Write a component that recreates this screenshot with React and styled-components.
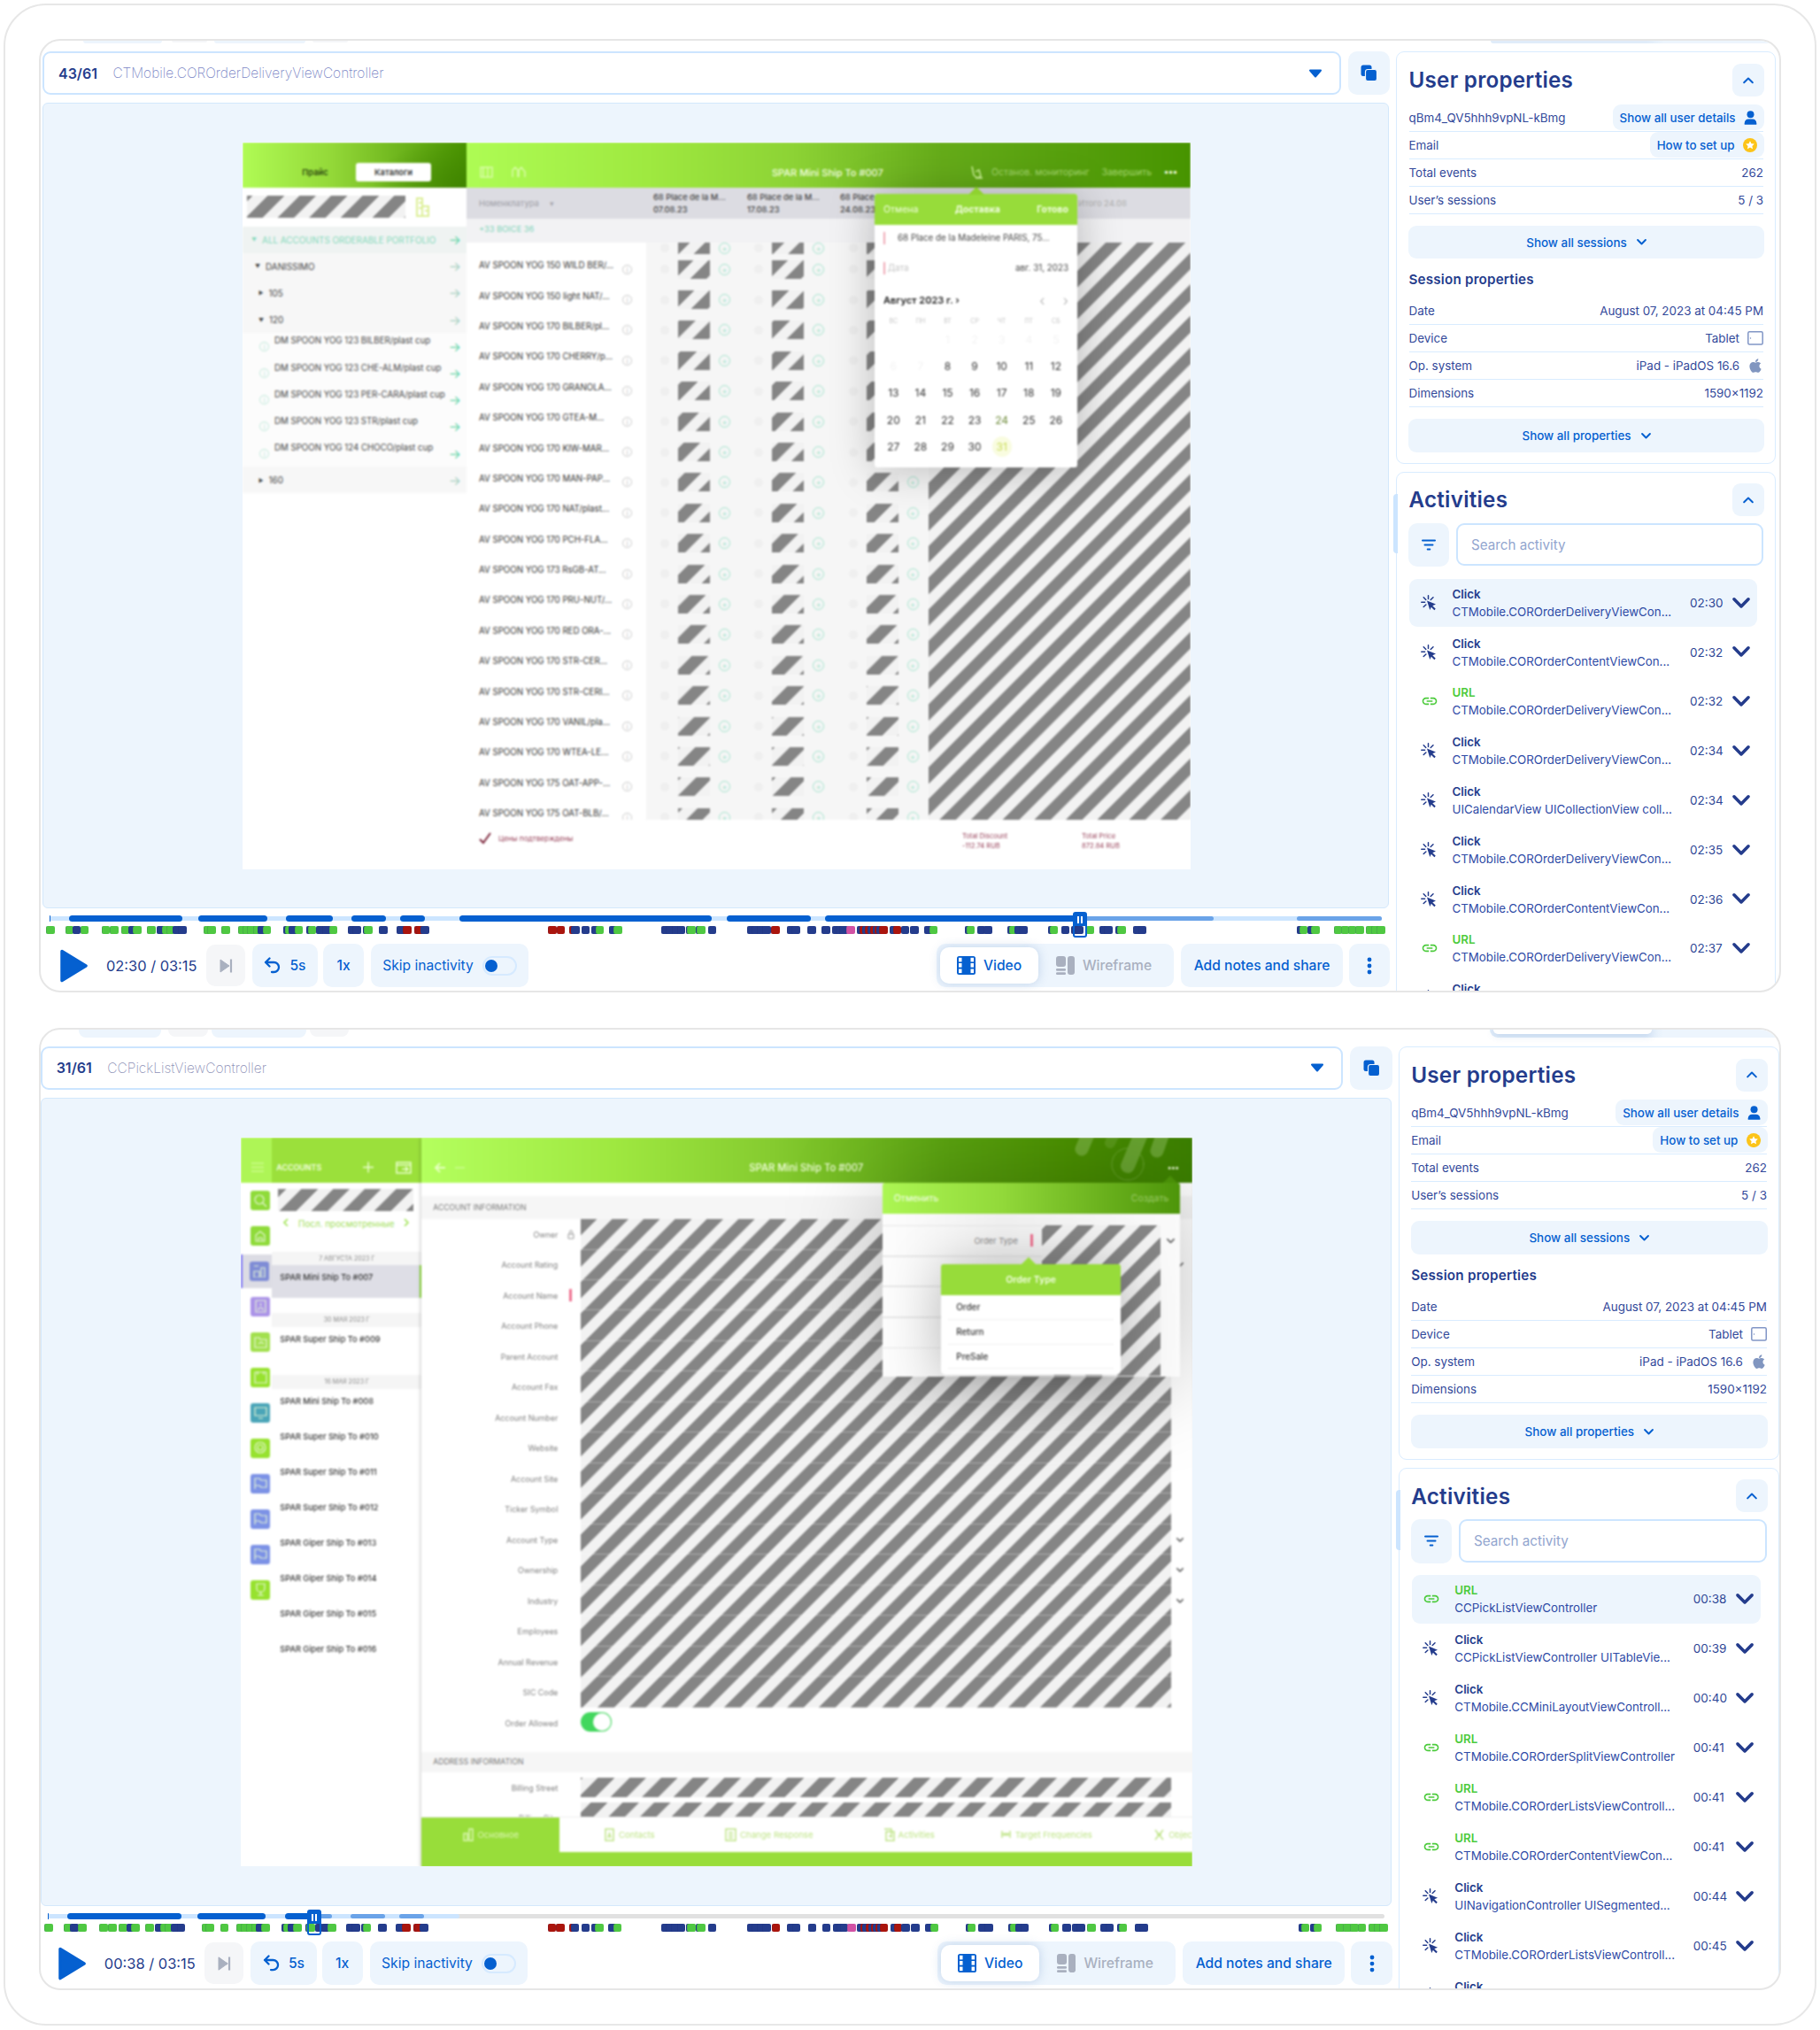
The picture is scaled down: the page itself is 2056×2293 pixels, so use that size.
import React from "react";
import styled, { createGlobalStyle, css } from "styled-components";
import { FaApple } from "react-icons/fa";
import { MdLink } from "react-icons/md";

const blue = "#0560d0";
const navy = "#243c8c";
const pale = "#edf5fd";
const line = "#cce5ff";

const GlobalStyle = createGlobalStyle`
  *, *::before, *::after { box-sizing: border-box; }
  body { margin: 0; background: #fff; font-family: Inter, "Liberation Sans", sans-serif; }
  svg { display: block; flex: none; }
`;

/* ---------- page frame ---------- */

const Page = styled.div`
  width: 2056px;
  height: 2293px;
  padding: 4px;
  background: #fff;
`;
const Frame = styled.main`
  width: 2048px;
  height: 2284px;
  border: 2px solid #e7e7e7;
  border-radius: 48px;
  padding: 38px;
  display: flex;
  flex-direction: column;
  gap: 40px;
`;
const Panel = styled.section`
  width: 1968px;
  height: ${(p) => p.$h}px;
  border: 2px solid #e6e6e6;
  border-radius: 24px;
  overflow: hidden;
  background: #fff;
`;
const Scale = styled.div`
  zoom: ${(p) => p.$zoom};
`;

/* ---------- remains of the toolbar above ---------- */

const Peek = styled.div`
  height: ${(p) => p.$h}px;
  display: flex;
  align-items: flex-start;
  padding-left: ${(p) => p.$left}px;
`;
const PeekPill = styled.i`
  width: ${(p) => p.$w}px;
  height: ${(p) => p.$h}px;
  margin-right: ${(p) => p.$gap}px;
  border-radius: 0 0 8px 8px;
  background: ${(p) => (p.$grey ? "#f5f6f8" : pale)};
`;
const PeekSwitch = styled.i`
  width: 326px;
  height: ${(p) => p.$h}px;
  margin-left: auto;
  background: linear-gradient(90deg, #e0ecf9 54%, ${pale} 60%);
  border-radius: 0 0 0 10px;
  display: flex;
  padding-left: 4px;
`;
const PeekThumb = styled.i`
  width: 178px;
  height: ${(p) => p.$h}px;
  background: #fff;
  border-radius: 0 0 10px 10px;
  box-shadow: 0 1px 8px rgba(70, 120, 190, 0.3);
`;

/* ---------- player column ---------- */

const Body = styled.div`
  display: flex;
  align-items: flex-start;
  margin-left: ${(p) => p.$left}px;
`;
const Player = styled.div`
  width: 1522px;
  flex: none;
  display: flex;
  flex-direction: column;
`;
const PickerRow = styled.div`
  display: flex;
  gap: 8px;
  margin-bottom: 9px;
`;
const Picker = styled.div`
  flex: 1;
  height: 49px;
  border: 2px solid ${line};
  border-radius: 9px;
  display: flex;
  align-items: center;
  padding: 0 19px 0 16px;
  font-size: 16px;
`;
const PickerCount = styled.b`
  margin-right: 17.500px;
  font-weight: 600;
  color: ${navy};
`;
const PickerName = styled.span`
  flex: 1;
  font-size: 15.450px;
  font-weight: 200;
  color: ${(p) => (p.$muted ? "#8f93b8" : "#7c87c6")};
`;
const IconButton = styled.div`
  width: ${(p) => p.$w || 47}px;
  height: 49px;
  border-radius: 10px;
  background: ${pale};
  display: flex;
  align-items: center;
  justify-content: center;
`;
const Stage = styled.div`
  width: 1521px;
  height: 910px;
  padding-left: 2px;
  background: ${pale};
  border: 1px solid #d3e8fc;
  border-radius: 6px;
  display: flex;
  align-items: center;
  justify-content: center;
`;

/* ---------- timeline ---------- */

const Timeline = styled.div`
  height: 40px;
  margin: 0 9px 0 8px;
  position: relative;
`;
const Track = styled.div`
  position: absolute;
  left: 0;
  right: 0;
  top: 9px;
  height: 5px;
  border-radius: 3px;
  background: ${(p) => p.$c};
`;
const Segment = styled.i`
  position: absolute;
  top: ${(p) => (p.$played ? 8 : 9)}px;
  height: ${(p) => (p.$played ? 7 : 5)}px;
  border-radius: 4px;
  background: ${(p) => (p.$played ? blue : "#6aa3e8")};
`;
const Mark = styled.i`
  position: absolute;
  top: 20px;
  width: 9.5px;
  height: 9px;
  border-radius: 2px;
  background: ${(p) => p.$c};
  box-shadow: inset 0.5px 0 0 rgba(30, 40, 110, 0.3);
`;
const Playhead = styled.i`
  position: absolute;
  top: 4px;
  width: 16px;
  height: 29px;
  margin-left: -8px;
  border: 2px solid ${blue};
  border-radius: 3px;
  display: flex;
  justify-content: center;
  align-items: flex-start;
`;
const PlayheadGrip = styled.span`
  width: 12px;
  height: 14px;
  background: ${blue};
  display: flex;
  gap: 2px;
  align-items: center;
  justify-content: center;
  &::before,
  &::after {
    content: "";
    width: 2px;
    height: 8px;
    background: #fff;
  }
`;

const TOTAL = 2950;
const SEGMENTS = [
  [0, 2], [43, 295], [330, 482], [524, 628], [668, 745], [777, 832],
  [907, 1467], [1499, 1686], [1718, 2578], [2762, 2950],
];
const COLORS = { g: "#4fc842", n: "#243c8c", r: "#aa150d", p: "#d152a4" };
const EVENTS = `g-7 g35 n50 g68 g115 g134 g158 n175 g185 g216 n237 g248 g258 n273 n285 g341 g349 g381
g417 g427 g438 g450 n460 g472 n517 g521 n530 g542 n569 g572 n590 n604 g619 n660 n671 n693 g696 n730
n769 r783 r808 r812 n822 r1104 r1123 r1151 n1155 n1178 n1200 g1209 n1238 g1249 n1355 n1365 n1377 n1389
n1410 g1412 n1430 g1433 n1458 n1544 n1554 n1566 n1578 r1598 n1632 n1643 n1678 n1710 n1733 n1741 n1749
p1765 n1787 r1794 n1799 r1805 n1811 r1817 n1822 r1827 n1831 r1837 n1860 r1868 n1885 n1906 n1937 g1948
n2027 g2030 n2054 n2068 n2121 g2125 n2136 n2147 n2211 g2214 n2240 n2262 n2271 g2295 n2324 n2335 n2360
g2364 n2400 n2410 n2762 g2767 n2786 g2794 g2844 g2859 g2875 g2892 g2915 g2927 g2939`
  .split(/\s+/)
  .map((e) => ({ color: COLORS[e[0]], at: Number(e.slice(1)) }));

const pct = (v) => `${(v / TOTAL) * 100}%`;

function PlayTimeline({ now, loaded }) {
  return (
    <Timeline>
      <Track $c="#e1e1e1" />
      <Track $c={line} style={{ right: pct(TOTAL - loaded) }} />
      {SEGMENTS.filter(([, b]) => b <= loaded).flatMap(([a, b]) => {
        const out = [];
        if (b > now)
          out.push(<Segment key={`b${a}`} style={{ left: pct(Math.max(a, now)), width: pct(b - Math.max(a, now)) }} />);
        if (a < now)
          out.push(<Segment key={`a${a}`} $played style={{ left: pct(a), width: pct(Math.min(b, now) - a) }} />);
        return out;
      })}
      {EVENTS.map((e, i) => (
        <Mark key={i} $c={e.color} style={{ left: pct(e.at) }} />
      ))}
      <Playhead style={{ left: pct(now) }}>
        <PlayheadGrip />
      </Playhead>
    </Timeline>
  );
}

/* ---------- player controls ---------- */

const Controls = styled.div`
  display: flex;
  align-items: center;
  height: 49px;
  font-size: 15.600px;
  padding-left: 20px;
`;
const Clock = styled.span`
  width: 113px;
  margin-left: 21px;
  font-size: 16.400px;
  color: ${navy};
  white-space: nowrap;
`;
const Control = styled.div`
  height: ${(p) => (p.$grey ? 47 : 49)}px;
  width: ${(p) => p.$w}px;
  margin-left: ${(p) => p.$ml || 0}px;
  border-radius: 10px;
  background: ${(p) => (p.$grey ? "#f5f6f8" : pale)};
  display: flex;
  align-items: center;
  justify-content: center;
  gap: 10px;
  font-weight: ${(p) => (p.$light ? 430 : 490)};
  color: ${blue};
  white-space: nowrap;
`;
const Toggle = styled.i`
  width: 39px;
  height: 22px;
  border: 2px solid #d6eaff;
  border-radius: 11px;
  display: flex;
  align-items: center;
  padding-left: 1px;
  &::before {
    content: "";
    width: 14px;
    height: 14px;
    border-radius: 50%;
    background: ${blue};
  }
`;
const ViewSwitch = styled.div`
  margin-left: auto;
  width: 268px;
  height: 49px;
  border-radius: 10px;
  background: ${pale};
  padding: 4px;
  display: flex;
  align-items: center;
`;
const ViewOption = styled.div`
  height: 41px;
  width: ${(p) => (p.$on ? 111 : 148)}px;
  border-radius: 10px;
  display: flex;
  align-items: center;
  justify-content: center;
  gap: 9px;
  font-weight: 490;
  color: ${(p) => (p.$on ? blue : "#a9b0bf")};
  ${(p) =>
    p.$on &&
    css`
      background: #fff;
      box-shadow: 0 0 12px rgba(60, 110, 180, 0.25);
    `}
`;

const PlayIcon = () => (
  <svg width="31" height="38" viewBox="0 0 31 38">
    <path d="M2 2.5 29 19 2 35.5Z" fill={blue} stroke={blue} strokeWidth="3.5" strokeLinejoin="round" />
  </svg>
);
const NextIcon = () => (
  <svg width="15" height="16" viewBox="0 0 15 16">
    <path d="M1 1 11 8 1 15Z" fill="#a9b0bf" stroke="#a9b0bf" strokeLinejoin="round" />
    <path d="M13 .5v15" stroke="#a9b0bf" strokeWidth="2.2" />
  </svg>
);
const BackIcon = () => (
  <svg width="19" height="19" viewBox="0 0 19 19" fill="none" stroke={blue} strokeWidth="2.3">
    <path d="M6.5 1.5 2 6l4.500 4.500M2 6h9.500a5.500 5.500 0 0 1 0 11H9" strokeLinecap="round" strokeLinejoin="round" />
  </svg>
);
const FilmIcon = () => (
  <svg width="21" height="21" viewBox="0 0 21 21">
    <rect width="21" height="21" rx="2.500" fill={blue} />
    {[1.8, 8, 14.500].flatMap((y) => [
      <rect key={`l${y}`} x="2" y={y} width="3.500" height="4.600" fill="#fff" />,
      <rect key={`r${y}`} x="15.500" y={y} width="3.500" height="4.600" fill="#fff" />,
    ])}
  </svg>
);
const WireIcon = () => (
  <svg width="21" height="21" viewBox="0 0 21 21" fill="#a9b0bf">
    <rect width="11" height="12" rx="3" />
    <rect x="13" width="8" height="21" rx="3" />
    <rect y="14" width="11" height="2.700" rx="1.300" />
    <rect y="18.300" width="11" height="2.700" rx="1.300" />
  </svg>
);
const DotsIcon = () => (
  <svg width="6" height="20" viewBox="0 0 6 20" fill={blue}>
    <circle cx="3" cy="3" r="2.400" />
    <circle cx="3" cy="10" r="2.400" />
    <circle cx="3" cy="17" r="2.400" />
  </svg>
);
const CopyIcon = () => (
  <svg width="19" height="19" viewBox="0 0 19 19">
    <rect x="0.500" y="0.500" width="12" height="12.500" rx="2.500" fill={blue} />
    <rect x="5.500" y="5.500" width="13" height="13" rx="2.500" fill={blue} stroke={pale} strokeWidth="1.200" />
  </svg>
);
const CaretIcon = () => (
  <svg width="16" height="10" viewBox="0 0 16 10">
    <path d="M2 1.500h12L8 8.500Z" fill={blue} stroke={blue} strokeWidth="2" strokeLinejoin="round" />
  </svg>
);
const Chevron = ({ w = 12, sw = 2, up, color = blue }) => (
  <svg width={w} height={w * 0.62} viewBox="0 0 16 10" fill="none" stroke={color} strokeWidth={(sw * 16) / w}
    strokeLinecap="round" strokeLinejoin="round" overflow="visible">
    <path d={up ? "M1.500 8.500 8 2l6.500 6.500" : "M1.500 1.500 8 8l6.500-6.500"} />
  </svg>
);

/* ---------- sidebar ---------- */

const Side = styled.aside`
  width: 429px;
  margin-left: 7px;
  display: flex;
  flex-direction: column;
  position: relative;
`;
const ResizeGrip = styled.i`
  position: absolute;
  left: -3px;
  top: 500px;
  width: 5px;
  height: 67px;
  border-radius: 4px 0 0 4px;
  background: ${line};
`;
const Card = styled.div`
  border: 1px solid #d9ecff;
  border-radius: 9px;
  padding: ${(p) => p.$pt || 12.5}px 12px 12px 13px;
  margin-bottom: 9.5px;
`;
const CardHead = styled.header`
  display: flex;
  align-items: center;
  justify-content: space-between;
  height: 37.5px;
`;
const CardTitle = styled.h2`
  margin: 0 0 0 0.5px;
  font-size: 24.200px;
  font-weight: 600;
  letter-spacing: 0.25px;
  color: ${navy};
`;
const Collapse = styled.span`
  width: 36px;
  height: 37px;
  border-radius: 9px;
  background: ${pale};
  display: flex;
  align-items: center;
  justify-content: center;
`;
const Props = styled.dl`
  margin: ${(p) => p.$mt || 0}px 1px 0 0.5px;
`;
const Prop = styled.div`
  height: 31.1px;
  border-bottom: 1px solid #d9ecff;
  display: flex;
  align-items: center;
  justify-content: space-between;
  font-size: 13.400px;
  font-weight: 370;
  color: #33499a;
`;
const PropName = styled.dt``;
const PropValue = styled.dd`
  margin: 0;
  display: flex;
  align-items: center;
  gap: 9px;
`;
const Pill = styled.span`
  height: 29px;
  margin-right: -1px;
  padding: 0 8px;
  border-radius: 9px;
  background: ${pale};
  display: flex;
  align-items: center;
  gap: 9.5px;
  font-size: 13.350px;
  font-weight: 480;
  color: ${blue};
`;
const WideButton = styled.div`
  height: 37.5px;
  margin-top: 12.900px;
  border-radius: 9px;
  background: ${pale};
  display: flex;
  align-items: center;
  justify-content: center;
  gap: 11px;
  font-size: 13.400px;
  font-weight: 480;
  color: ${blue};
`;
const SubTitle = styled.h3`
  margin: 0 0 0 0.5px;
  padding-top: 3px;
  height: 43.5px;
  display: flex;
  align-items: center;
  font-size: 15.200px;
  font-weight: 600;
  letter-spacing: 0.2px;
  color: ${navy};
`;
const SearchRow = styled.div`
  display: flex;
  gap: 8px;
  margin-top: 8px;
`;
const Search = styled.div`
  flex: 1;
  height: 48px;
  margin-right: 1px;
  border: 2px solid ${line};
  border-radius: 9px;
  padding-left: 15px;
  display: flex;
  align-items: center;
  font-size: 15.200px;
  font-weight: 370;
  color: #93a6cf;
`;
const Activities = styled.div`
  margin: 13.5px 8px 0 1px;
`;
const Activity = styled.div`
  height: 54.500px;
  margin-bottom: 1.3px;
  border-radius: 9px;
  background: ${(p) => (p.$on ? pale : "transparent")};
  display: flex;
  align-items: center;
  padding: 0 8px 0 12.5px;
`;
const ActIcon = styled.span`
  width: 36px;
`;
const ActText = styled.div`
  flex: 1;
  font-size: 13.300px;
  line-height: 20px;
  color: #2f4ba6;
  white-space: nowrap;
`;
const ActKind = styled.div`
  font-weight: 600;
  color: ${(p) => (p.$url ? "#4ccb3c" : navy)};
`;
const ActTime = styled.span`
  width: 48px;
  font-size: 13.500px;
  color: #2f4796;
`;

const ClickIcon = () => (
  <svg width="18" height="18" viewBox="0 0 18 18" fill={navy}>
    <path d="M7 6.600 17 10.600 13.300 12.200 16.800 15.700 15.300 17.200 11.800 13.700 10.300 17Z" />
    <path d="M8.500.8v3.600M3.200 2.800l2.600 2.700M.8 8.200h3.800M3.200 13.500l2.700-2.500M14 2.800l-2.800 2.700" stroke={navy} strokeWidth="1.500" strokeLinecap="round" />
  </svg>
);
const FilterIcon = () => (
  <svg width="16" height="13" viewBox="0 0 16 13" stroke={blue} strokeWidth="2" strokeLinecap="round">
    <path d="M1 1.500h14M3.500 6.500h9M6.700 11.500h2.600" />
  </svg>
);
const PersonIcon = () => (
  <svg width="15" height="16" viewBox="0 0 15 16" fill={blue}>
    <circle cx="7.500" cy="4.300" r="4" />
    <path d="M.7 15.700v-1.400c0-3 2-4.700 4.500-4.700h4.600c2.500 0 4.500 1.700 4.500 4.700v1.400Z" />
  </svg>
);
const StarBadge = () => (
  <svg width="16" height="16" viewBox="0 0 16 16">
    <circle cx="8" cy="8" r="8" fill="#fcc419" />
    <path d="m8 3.200 1.500 3 3.300.4-2.400 2.300.6 3.300-3-1.600-3 1.600.6-3.300-2.400-2.300 3.300-.4Z" fill="#fff" />
  </svg>
);
const TabletIcon = () => (
  <svg width="18" height="16" viewBox="0 0 18 16" fill="none" stroke="#8196c6">
    <rect x=".8" y=".8" width="16.400" height="14.200" rx="1.500" strokeWidth="1.500" />
    <path d="M3.500 7.300v1.400" strokeWidth="1.200" />
  </svg>
);

function Sidebar({ items }) {
  return (
    <Side>
      <Card>
        <CardHead>
          <CardTitle>User properties</CardTitle>
          <Collapse><Chevron up /></Collapse>
        </CardHead>
        <Props $mt={8.7}>
          <Prop>
            <PropName>qBm4_QV5hhh9vpNL-kBmg</PropName>
            <Pill>Show all user details<PersonIcon /></Pill>
          </Prop>
          <Prop>
            <PropName>Email</PropName>
            <Pill>How to set up<StarBadge /></Pill>
          </Prop>
          <Prop><PropName>Total events</PropName><PropValue>262</PropValue></Prop>
          <Prop><PropName>User’s sessions</PropName><PropValue>5 / 3</PropValue></Prop>
        </Props>
        <WideButton>Show all sessions<Chevron w={11} /></WideButton>
        <SubTitle>Session properties</SubTitle>
        <Props>
          <Prop><PropName>Date</PropName><PropValue>August 07, 2023 at 04:45 PM</PropValue></Prop>
          <Prop><PropName>Device</PropName><PropValue>Tablet<TabletIcon /></PropValue></Prop>
          <Prop><PropName>Op. system</PropName><PropValue>iPad - iPadOS 16.6<FaApple size={18} color="#8196c0" /></PropValue></Prop>
          <Prop><PropName>Dimensions</PropName><PropValue>1590×1192</PropValue></Prop>
        </Props>
        <WideButton>Show all properties<Chevron w={11} /></WideButton>
      </Card>
      <Card $pt={11.3}>
        <CardHead>
          <CardTitle>Activities</CardTitle>
          <Collapse><Chevron up /></Collapse>
        </CardHead>
        <SearchRow>
          <IconButton $w={46}><FilterIcon /></IconButton>
          <Search>Search activity</Search>
        </SearchRow>
        <Activities>
          {items.map(([kind, text, time], i) => (
            <Activity key={i} $on={i === 0}>
              <ActIcon>{kind === "URL" ? <MdLink size={20} color="#4ccb3c" /> : <ClickIcon />}</ActIcon>
              <ActText>
                <ActKind $url={kind === "URL"}>{kind}</ActKind>
                {text}
              </ActText>
              <ActTime>{time}</ActTime>
              <Chevron w={20} sw={3.6} color={navy} />
            </Activity>
          ))}
        </Activities>
      </Card>
      <ResizeGrip />
    </Side>
  );
}

/* ---------- recorded tablet screens: shared parts ---------- */

const Clip = styled.div`
  width: 1071px;
  height: 821px;
  overflow: hidden;
  background: #fff;
`;
const Screen = styled.div`
  width: ${(p) => p.$w}px;
  height: ${(p) => p.$h}px;
  zoom: ${(p) => p.$zoom || 1};
  position: relative;
  display: flex;
  font-size: 9.300px;
  color: #444;
  filter: blur(0.8px);
  white-space: nowrap;
`;
const Hatch = styled.div`
  ${(p) => css`
    width: ${p.$w}px;
    height: ${p.$h}px;
    background: repeating-linear-gradient(
      135deg,
      #858585 ${p.$s * 0.707}px,
      #858585 ${(p.$s + 18) * 0.707}px,
      #f2f2f2 ${(p.$s + 18.7) * 0.707}px,
      #f2f2f2 ${(p.$s + 35) * 0.707}px,
      #858585 ${(p.$s + 35.7) * 0.707}px
    );
  `}
  flex: none;
`;
const Column = styled.div`
  width: ${(p) => p.$w}px;
  height: 100%;
  flex: none;
  display: flex;
  flex-direction: column;
  background: ${(p) => p.$bg || "#fff"};
`;
const Bar = styled.div`
  height: 51.500px;
  flex: none;
  display: flex;
  align-items: center;
  padding: 17px ${(p) => p.$pr || 0}px 0 ${(p) => p.$pl || 0}px;
  background: ${(p) => p.$bg};
  color: #f3ffe0;
`;
const RedBar = styled.i`
  width: ${(p) => p.$w || 3}px;
  height: 14px;
  background: ${(p) => p.$c || "#ee6f8e"};
  margin-left: ${(p) => p.$ml || 0}px;
`;
const Grow = styled.i`
  flex: 1;
`;

/* ---------- screen 1: order table ---------- */

const SegLabel = styled.span`
  width: ${(p) => p.$w}px;
  padding-left: 36px;
  text-align: center;
  font-weight: 600;
  color: #2e4a10;
`;
const SegOn = styled.span`
  width: 85px;
  height: 21px;
  border-radius: 3px;
  background: #fff;
  display: flex;
  align-items: center;
  justify-content: center;
  font-weight: 600;
  color: #333;
`;
const BrandRow = styled.div`
  height: 43.500px;
  flex: none;
  display: flex;
  align-items: center;
  gap: 12px;
  padding: 0 5px;
`;
const TreeRow = styled.div`
  height: 30.2px;
  flex: none;
  display: flex;
  align-items: center;
  padding: 0 6px 0 ${(p) => p.$pl}px;
  gap: 6px;
  background: ${(p) => (p.$root ? "#eff3f2" : p.$item ? "#fcfcfc" : "#f7f7f7")};
  color: ${(p) => (p.$root ? "#86d9bb" : "#444")};
`;
const TreeText = styled.span`
  flex: 1;
  min-width: 0;
  font-size: ${(p) => (p.$item ? 9.700 : 9.900)}px;
  padding-bottom: ${(p) => (p.$item ? 13 : 0)}px;
`;
const TreeCaret = styled.span`
  font-size: 6px;
`;
const TreeArrow = styled.span`
  font-size: 15px;
  color: ${(p) => (p.$hot ? "#5ed3a6" : "#a5cfc0")};
`;
const Ring = styled.i`
  width: ${(p) => p.$w || 11}px;
  height: ${(p) => p.$w || 11}px;
  border-radius: 50%;
  border: 1px solid ${(p) => p.$c};
  display: flex;
  align-items: center;
  justify-content: center;
  font-style: normal;
  font-size: 9px;
  line-height: 1;
  color: ${(p) => p.$c};
  flex: none;
`;
const TableHead = styled.div`
  height: 34.500px;
  flex: none;
  display: flex;
  align-items: center;
  padding-top: 1px;
  background: #dcdce2;
  color: #999;
`;
const HeadCell = styled.div`
  width: ${(p) => p.$w}px;
  padding-left: ${(p) => p.$pl}px;
  line-height: 13.400px;
  font-weight: 500;
  color: ${(p) => p.$c || "#444"};
`;
const GroupRow = styled.div`
  height: 27px;
  flex: none;
  padding: 6px 14px;
  background: #f2f2f4;
  color: #7fd3b8;
`;
const TableBody = styled.div`
  height: 652.500px;
  flex: none;
  display: flex;
  overflow: hidden;
  background: #fff;
`;
const TableRows = styled.div`
  width: 522px;
  flex: none;
`;
const TableRow = styled.div`
  height: ${(p) => p.$h || 34.4}px;
  overflow: hidden;
  display: flex;
  align-items: center;
`;
const NameCell = styled.div`
  width: 203px;
  height: 100%;
  padding-left: 14px;
  display: flex;
  align-items: center;
`;
const Name = styled.span`
  width: 162px;
  padding-bottom: 9px;
  font-size: 9.700px;
  color: #333;
`;
const QtyCell = styled.div`
  width: 106.300px;
  height: 100%;
  padding-left: 16px;
  display: flex;
  align-items: center;
  gap: 10px;
  background: #f6f6f6;
`;
const Minus = styled.i`
  width: 10px;
  height: 10px;
  border-radius: 50%;
  background: #efefef;
`;
const FootRow = styled.div`
  flex: 1;
  display: flex;
  padding: 14px 0 0 14px;
  line-height: 10.500px;
  font-size: 7.600px;
  color: #98425a;
`;
const FootNote = styled.span`
  width: 532px;
  flex: none;
  padding: 2px 0 0 8px;
  font-size: 8.200px;
`;
const FootTotal = styled.span`
  width: 135px;
  flex: none;
`;
const Popover = styled.div`
  position: absolute;
  left: ${(p) => p.$x}px;
  top: ${(p) => p.$y}px;
  width: ${(p) => p.$w}px;
  height: ${(p) => p.$h}px;
  border-radius: ${(p) => p.$r || 3}px;
  background: #fff;
  box-shadow: 0 2px ${(p) => p.$blur || 40}px rgba(0, 0, 0, 0.25);
  &::before {
    content: "";
    position: absolute;
    left: ${(p) => p.$tip - 9}px;
    top: -8px;
    border: 9px solid transparent;
    border-top: 0;
    border-bottom-color: ${(p) => p.$tipColor};
  }
`;
const PopHead = styled.div`
  height: ${(p) => p.$h}px;
  padding: 0 ${(p) => p.$px}px;
  border-radius: 3px 3px 0 0;
  background: ${(p) => p.$bg || "#97dc3a"};
  display: flex;
  align-items: center;
  justify-content: ${(p) => (p.$center ? "center" : "space-between")};
  font-size: 10.500px;
  font-weight: ${(p) => (p.$center ? 600 : 400)};
  color: #f4ffe6;
`;
const PopRow = styled.div`
  height: ${(p) => p.$h}px;
  padding: 0 10px;
  display: flex;
  align-items: center;
  gap: ${(p) => p.$gap || 3}px;
  font-size: 9.800px;
`;
const Month = styled.b`
  font-size: 11px;
  font-weight: 600;
  color: #222;
`;
const Faint = styled.span`
  color: #c4c4c4;
`;
const MonthArrows = styled.span`
  font-size: 16px;
  word-spacing: 16px;
  color: #bbb;
`;
const Days = styled.div`
  display: grid;
  grid-template-columns: repeat(7, 30.600px);
  grid-auto-rows: ${(p) => (p.$names ? 14 : 30.2)}px;
  padding-left: 6px;
  place-items: center;
  font-size: ${(p) => (p.$names ? 7 : 12)}px;
  color: #333;
`;
const Day = styled.span`
  ${(p) => p.$off && "color: #f3f3f3;"}
  ${(p) => p.$today && "color: #6d8a3a;"}
  ${(p) => p.$on && "color: #c9db55; background: #f9fce0; border-radius: 50%; padding: 4px 5px;"}
`;

const TREE = [
  ["root", "ALL ACCOUNTS ORDERABLE PORTFOLIO", 10],
  ["node", "DANISSIMO", 14],
  ["leaf", "105", 18],
  ["node", "120", 18],
  ["item", "DM SPOON YOG 123 BILBER/plast cup"],
  ["item", "DM SPOON YOG 123 CHE-ALM/plast cup"],
  ["item", "DM SPOON YOG 123 PER-CARA/plast cup"],
  ["item", "DM SPOON YOG 123 STR/plast cup"],
  ["item", "DM SPOON YOG 124 CHOCO/plast cup"],
  ["leaf", "160", 18],
];
const PRODUCTS = [
  "150 WILD BER/...", "150 light NAT/...", "170 BILBER/pl...", "170 CHERRY/p...", "170 GRANOLA...",
  "170 GTEA-M...", "170 KIW-MAR...", "170 MAN-PAP...", "170 NAT/plast...", "170 PCH-FLA...",
  "173 RsGB-AT...", "170 PRU-NUT/...", "170 RED ORA-...", "170 STR-CER...", "170 STR-CERI...",
  "170 VANIL/pla...", "170 WTEA-LE...", "175 OAT-APP-...", "175 OAT-BLB/...",
];

function OrderScreen() {
  const qty = (i) =>
    [0, 1, 2].map((c) => (
      <QtyCell key={c}>
        <Minus />
        <Hatch $w={36} $h={21} $s={-1 + i * 1.3 + c * 0.8} />
        {!(c === 2 && i < 7) && <Ring $w={13} $c="#9fe3cb">+</Ring>}
      </QtyCell>
    ));
  return (
    <Screen $w={1071} $h={821}>
      <Column $w={253}>
        <Bar $bg="radial-gradient(ellipse 120px 60px at 105% 100%, #3f8300, transparent), linear-gradient(90deg, #b0fb54, #93d838 40%, #6cb31b 72%, #4a9500)">
          <SegLabel $w={128}>Прайс</SegLabel>
          <SegOn>Каталоги</SegOn>
        </Bar>
        <BrandRow>
          <Hatch $w={179} $h={25} $s={24} />
          <svg width="17" height="22" viewBox="0 0 17 22" fill="none" stroke="#dcef96" strokeWidth="2">
            <path d="M1 1h6v20H1zM7 10h7v11H7M3 6h3M3 12h3M10 15h3" />
          </svg>
        </BrandRow>
        {TREE.map(([kind, text, pl]) => (
          <TreeRow key={text} $pl={pl || 19} $root={kind === "root"} $item={kind === "item"}>
            {kind === "item" ? <Ring $c="#bfe9da">i</Ring> : <TreeCaret>{kind === "leaf" ? "▶" : "▼"}</TreeCaret>}
            <TreeText $item={kind === "item"}>{text}</TreeText>
            <TreeArrow $hot={kind === "item" || kind === "root"}>→</TreeArrow>
          </TreeRow>
        ))}
      </Column>
      <Column $w={818}>
        <Bar $pl={14} $pr={15} $bg="linear-gradient(90deg, #aefc54, #9fe940 25%, #8dd335 45%, #66ac1a 65%, #479400)" style={{ fontSize: 10.5 }}>
          <svg width="54" height="16" viewBox="0 0 54 16" fill="none" stroke="#d9fba8" strokeWidth="1.500">
            <path d="M2 2h13v11H2zM5 2v11M10 2v11M38 13V5l3-3 3 3v8M45 13V5l3-3 4 5v6" />
          </svg>
          <span style={{ marginLeft: 277, width: 224, fontWeight: 500, fontSize: 11 }}>SPAR Mini Ship To #007</span>
          <svg width="14" height="16" viewBox="0 0 14 16" fill="none" stroke="#d9fba8" strokeWidth="1.300">
            <path d="M2 1l2 10 4 3 4-2-2-7-4 2M6 14h8" />
          </svg>
          <span style={{ marginLeft: 10, color: "#a4d66f" }}>Останов. мониторинг</span>
          <Grow />
          <span style={{ marginRight: 14, color: "#a4d66f" }}>Завершить</span>
          <b>•••</b>
        </Bar>
        <TableHead>
          <HeadCell $w={197} $pl={14} $c="#a6a6ae">Номенклатура &nbsp; &nbsp; ▾</HeadCell>
          <HeadCell $w={106} $pl={14}>68 Place de la M...<br />07.08.23</HeadCell>
          <HeadCell $w={106} $pl={14}>68 Place de la M...<br />17.08.23</HeadCell>
          <HeadCell $w={272} $pl={13}>68 Place de la M...<br />24.08.23</HeadCell>
          <HeadCell $w={110} $pl={10} $c="#b4b4b4">Итого 24.08</HeadCell>
        </TableHead>
        <GroupRow>+33 BOICE 36</GroupRow>
        <TableBody>
          <TableRows>
            <TableRow $h={13.5}><NameCell />{qty(0)}</TableRow>
            {PRODUCTS.map((p, i) => (
              <TableRow key={p}>
                <NameCell>
                  <Name>AV SPOON YOG {p}</Name>
                  <Ring $c="#c9c9c9">i</Ring>
                </NameCell>
                {qty(i)}
              </TableRow>
            ))}
          </TableRows>
          <Hatch $w={296} $h={653} $s={22} />
        </TableBody>
        <FootRow>
          <svg width="14" height="14" viewBox="0 0 14 14" fill="none" stroke="#7a2238" strokeWidth="2">
            <path d="M1 8l4 4L13 1" />
          </svg>
          <FootNote>Цены подтверждены</FootNote>
          <FootTotal>Total Discount<br />-112.74 RUB</FootTotal>
          <FootTotal>Total Price<br />872.84 RUB</FootTotal>
        </FootRow>
      </Column>
      <Popover $x={714} $y={58} $w={229} $h={309} $tip={115} $tipColor="#8fd22f" $blur={50}>
        <PopHead $h={35} $px={10}><span>Отмена</span><b>Доставка</b><b>Готово</b></PopHead>
        <PopRow $h={30} $gap={14}><RedBar $w={2} $c="#f0a9b6" />68 Place de la Madeleine PARIS, 75...</PopRow>
        <PopRow $h={38}><RedBar $w={2} $c="#f0a9b6" /><Faint>Дата</Faint><Grow /><span>авг. 31, 2023</span></PopRow>
        <PopRow $h={34}><Month>Август 2023 г. ›</Month><Grow /><MonthArrows>‹ ›</MonthArrows></PopRow>
        <Days $names>
          {["ВС", "ПН", "ВТ", "СР", "ЧТ", "ПТ", "СБ"].map((d) => <Faint key={d}>{d}</Faint>)}
        </Days>
        <Days style={{ marginTop: -1 }}>
          <i /><i />
          {Array.from({ length: 31 }, (_, i) => i + 1).map((d) => (
            <Day key={d} $off={d < 8} $today={d === 24} $on={d === 31}>{d}</Day>
          ))}
        </Days>
      </Popover>
    </Screen>
  );
}

/* ---------- screen 2: account form ---------- */

const RailItem = styled.div`
  height: 40px;
  flex: none;
  display: flex;
  align-items: center;
  padding-left: 11px;
  ${(p) => p.$on && "background: #dcdce4; border-left: 3px solid #7a72f5; padding-left: 8px; height: 38px; margin: 1px 0;"}
`;
const RailIcon = styled.span`
  width: 22px;
  height: 22px;
  border-radius: 3px;
  background: ${(p) => p.$c};
  display: flex;
  align-items: center;
  justify-content: center;
`;
const MaskedSearch = styled.div`
  padding: 6.500px 0 0 7px;
`;
const Nav = styled.div`
  height: 46px;
  display: flex;
  align-items: flex-start;
  justify-content: space-between;
  padding: 8px 14px 0 13px;
  font-size: 9.900px;
  color: #a2e05a;
`;
const DateHead = styled.div`
  height: 16px;
  flex: none;
  background: #f5f5f5;
  text-align: center;
  line-height: 16px;
  font-size: 7.100px;
  color: #8a8a8a;
`;
const Account = styled.div`
  height: ${(p) => p.$h}px;
  flex: none;
  padding: 7.500px 0 0 9px;
  font-size: 9.200px;
  font-weight: 500;
  color: #333;
  ${(p) => p.$on && "background: #dedee6; border-right: 3px solid #8fe03a; margin-bottom: 17px;"}
`;
const SectionHead = styled.div`
  height: ${(p) => p.$h}px;
  flex: none;
  margin-top: ${(p) => p.$mt}px;
  padding-left: 13px;
  display: flex;
  align-items: center;
  background: #f6f6f6;
  font-size: 8.600px;
  color: #777;
`;
const FormArea = styled.div`
  height: ${(p) => p.$h}px;
  flex: none;
  display: flex;
  overflow: hidden;
`;
const Labels = styled.div`
  width: 180px;
  flex: none;
`;
const Label = styled.div`
  height: 34.500px;
  display: flex;
  align-items: center;
  font-size: 8.900px;
  color: #808080;
`;
const LabelText = styled.span`
  width: 154px;
  text-align: right;
`;
const LabelMark = styled.span`
  width: 26px;
  padding-left: 3px;
  display: flex;
  justify-content: center;
`;
const Ruled = styled.div`
  width: 667px;
  height: 552px;
  display: grid;
  grid-auto-rows: 34.5px;
  background: repeating-linear-gradient(135deg, #858585 0, #858585 12.7px, #f2f2f2 13.2px, #f2f2f2 24.8px, #858585 25.24px);
`;
const Rule = styled.i`
  border-bottom: 1px solid rgba(255, 255, 255, 0.35);
`;
const Arrows = styled.div`
  width: 20px;
`;
const ArrowCell = styled.div`
  height: 34.500px;
  display: flex;
  align-items: center;
  justify-content: center;
`;
const Switch = styled.i`
  width: 35px;
  height: 22px;
  margin-top: 5px;
  border-radius: 11px;
  background: #42d75d;
  padding: 1px;
  display: flex;
  justify-content: flex-end;
  &::before {
    content: "";
    width: 20px;
    height: 20px;
    border-radius: 50%;
    background: #fff;
  }
`;
const Address = styled.div`
  padding-top: 6px;
  display: flex;
  flex-direction: column;
  gap: 6px;
`;
const Tabs = styled.div`
  height: 40px;
  flex: none;
  display: flex;
  overflow: hidden;
  border-top: 1px solid #eee;
`;
const Tab = styled.div`
  width: ${(p) => p.$w}px;
  flex: none;
  display: flex;
  align-items: center;
  justify-content: center;
  gap: 4px;
  font-size: 9.600px;
  color: ${(p) => (p.$on ? "#dcf7b4" : "#bfe487")};
  background: ${(p) => (p.$on ? "#98dd3a" : "transparent")};
`;
const BottomBar = styled.div`
  flex: 1;
  background: #98dd3a;
`;
const PopForm = styled.div`
  height: 184px;
  padding-top: 13px;
  display: flex;
  background: linear-gradient(90deg, #fdfdfd, #f1f1f1 40%, #fafafa);
`;
const PopFormLabel = styled.div`
  width: 180px;
  height: 35px;
  border-top: 1px solid #e6e6e6;
  border-bottom: 1px solid #e6e6e6;
  display: flex;
  align-items: center;
  justify-content: flex-end;
  gap: 14px;
  padding-right: 10px;
  color: #888;
`;
const PopFormArrow = styled.div`
  padding: 15px 7px;
`;
const Choice = styled.div`
  height: 28px;
  margin: 0 8px;
  padding-left: 9px;
  border-bottom: 1px solid #efefef;
  display: flex;
  align-items: center;
  font-size: 9.900px;
  font-weight: 500;
  color: #333;
`;

const RAIL = [
  ["#8fdb3a", "M6 1a5 5 0 1 0 0 10A5 5 0 0 0 6 1zM10 10l4 4"],
  ["#8fdb3a", "M2 13V6l5-4 5 4v7zM5 13V9h4v4"],
  ["#7f8cd6", "M1 7h6v7H1zM9 3h4v11H9zM1 1h5"],
  ["#ab93e8", "M2 1h11v13H2zM5 12c0-4 5-4 5 0M7.500 4v3"],
  ["#a2e04e", "M1 3h5l1 2h7v9H1zM5 10l3-2 3 2"],
  ["#97e22f", "M1 2h13v12H1zM4 1v4M11 1v4"],
  ["#4aa5b8", "M1 2h13v9H1zM5 14h5"],
  ["#97e22f", "M7 1a6 6 0 1 0 0 12A6 6 0 0 0 7 1zM7 4a3 3 0 1 0 0 6 3 3 0 0 0 0-6z"],
  ["#7c92e6", "M1 14V2h5l2 2h6v8H8l-2-2H1"],
  ["#7c92e6", "M1 14V2h5l2 2h6v8H8l-2-2H1"],
  ["#7c92e6", "M1 14V2h5l2 2h6v8H8l-2-2H1"],
  ["#97e22f", "M3 1h9v5a4 4 0 0 1-9 0zM7.500 9v5M4 14h7"],
];
const LABELS = [
  "Owner", "Account Rating", "Account Name", "Account Phone", "Parent Account", "Account Fax", "Account Number",
  "Website", "Account Site", "Ticker Symbol", "Account Type", "Ownership", "Industry", "Employees",
  "Annual Revenue", "SIC Code", "Order Allowed",
];
const TABS = [
  ["Основное", 156, "M1 14V6h4v8zM7 14V1h4v13z"],
  ["Contacts", 157, "M2 1h9v13H2zM5 11l1.500-5L8 11"],
  ["Change Response", 159, "M1 1h11v13H1zM4 5h5M4 8h5M4 11h5"],
  ["Activities", 157, "M1 1h8v10M3 4h9v10H3zM6 9h3"],
  ["Target Frequencies", 153, "M1 7h10M2 3v8M11 3v8M5 5v4M8 5v4"],
  ["Objectives", 155, "M2 2l9 11M11 2L2 13M4 7h5"],
];

const NavArrow = ({ back }) => (
  <svg width="6" height="10" viewBox="0 0 6 10" fill="none" stroke="#9be24a" strokeWidth="1.600">
    <path d={back ? "M5 1 1 5l4 4" : "M1 1l4 4-4 4"} />
  </svg>
);

function AccountScreen() {
  return (
    <Screen $w={1074.5} $h={824} $zoom={0.9967}>
      <Column $w={35}>
        <Bar $bg="#aef556" $pl={12}>
          <svg width="14" height="11" viewBox="0 0 14 11" stroke="#cdfb8c" strokeWidth="1.500"><path d="M0 1h14M0 5.500h14M0 10h14" /></svg>
        </Bar>
        {RAIL.map(([c, d], i) => (
          <RailItem key={i} $on={i === 2}>
            <RailIcon $c={c}>
              <svg width="15" height="15" viewBox="0 0 15 15" fill="none" stroke="#e6f6d6" strokeWidth="1.200"><path d={d} /></svg>
            </RailIcon>
          </RailItem>
        ))}
      </Column>
      <Column $w={169}>
        <Bar $bg="#9be03b" $pl={5} $pr={11}>
          <b style={{ fontSize: 8.9, fontWeight: 600 }}>ACCOUNTS</b>
          <Grow />
          <svg width="55" height="15" viewBox="0 0 55 15" fill="none" stroke="#ecffd0" strokeWidth="1.500">
            <path d="M0 7.500h12M6 1.500v12M38 2h16v12H38zM38 5h16M44 9.500h7M48 7l3 2.500L48 12" />
          </svg>
        </Bar>
        <MaskedSearch><Hatch $w={153} $h={25} $s={27} /></MaskedSearch>
        <Nav><NavArrow back /><span>Посл. просмотренные</span><NavArrow /></Nav>
        <DateHead>7 АВГУСТА 2023 Г</DateHead>
        <Account $on $h={37}>SPAR Mini Ship To #007</Account>
        <DateHead>30 МАЯ 2023 Г</DateHead>
        <Account $h={54}>SPAR Super Ship To #009</Account>
        <DateHead>16 МАЯ 2023 Г</DateHead>
        {["Mini Ship To #008", "Super Ship To #010", "Super Ship To #011", "Super Ship To #012", "Giper Ship To #013",
          "Giper Ship To #014", "Giper Ship To #015", "Giper Ship To #016"].map((t) => (
          <Account key={t} $h={40}>SPAR {t}</Account>
        ))}
      </Column>
      <Column $w={870.5} style={{ boxShadow: "-1px 0 4px rgba(0,0,0,.2)" }}>
        <Bar $pl={14} $pr={15}
          $bg="linear-gradient(90deg, #b4ff5e, #9fe840 25%, #86cc30 45%, #5ba410 68%, #4a9000 85%, #3c8000)">
          <svg width="36" height="12" viewBox="0 0 36 12" fill="none" stroke="#e6ffc0" strokeWidth="2"><path d="M13 6H2M7 1 2 6l5 5" /><path d="M24 6h11" opacity=".4" /></svg>
          <span style={{ marginLeft: 320, flex: 1, fontSize: 11.3, fontWeight: 500 }}>SPAR Mini Ship To #007</span>
          <svg width="118" height="51" viewBox="0 0 118 51" style={{ marginTop: -17, marginRight: -10 }} stroke="#9dcc73" strokeLinecap="round" opacity=".42">
            <path d="M20-8 11 13M104-8 96 15" strokeWidth="15" /><path d="M78-4 63 32" strokeWidth="16" />
            <path d="M50-8 43 6" strokeWidth="12" opacity=".5" />
            <circle cx="63" cy="30" r="18" fill="none" strokeWidth="1" />
          </svg>
          <b style={{ fontSize: 9 }}>•••</b>
        </Bar>
        <SectionHead $mt={15} $h={26}>ACCOUNT INFORMATION</SectionHead>
        <FormArea $h={602}>
          <Labels>
            {LABELS.map((l, i) => (
              <Label key={l}>
                <LabelText>{l}</LabelText>
                <LabelMark>
                  {i === 0 && <svg width="8" height="11" viewBox="0 0 8 11" fill="none" stroke="#999"><path d="M1 5h6v5H1zM2.500 5V2.500a1.500 1.500 0 0 1 3 0V5" /></svg>}
                  {i === 2 && <RedBar />}
                </LabelMark>
              </Label>
            ))}
          </Labels>
          <div>
            <Ruled>{LABELS.slice(1).map((l) => <Rule key={l} />)}</Ruled>
            <Switch />
          </div>
          <Arrows>
            {LABELS.map((l, i) => (
              <ArrowCell key={l}>{[1, 10, 11, 12].includes(i) && <Chevron w={8} sw={1.6} color="#555" />}</ArrowCell>
            ))}
          </Arrows>
        </FormArea>
        <SectionHead $mt={0} $h={23}>ADDRESS INFORMATION</SectionHead>
        <FormArea $h={50}>
          <Labels>
            <Label><LabelText>Billing Street</LabelText></Label>
            <Label><LabelText>Billing City</LabelText></Label>
          </Labels>
          <Address>
            <Hatch $w={667} $h={22} $s={20} />
            <Hatch $w={667} $h={17} $s={12} />
          </Address>
        </FormArea>
        <Tabs>
          {TABS.map(([t, w, d], i) => (
            <Tab key={t} $w={w} $on={i === 0}>
              <svg width="13" height="15" viewBox="0 0 13 15" fill="none" stroke="currentColor" strokeWidth="1.500"><path d={d} /></svg>
              {t}
            </Tab>
          ))}
        </Tabs>
        <BottomBar />
      </Column>
      <Popover $x={724.5} $y={51.5} $w={336.5} $h={218.5} $tip={326} $tipColor="#4a8f08" $blur={110}>
        <PopHead $h={34.5} $px={13} $bg="linear-gradient(90deg, #acf653, #92d93a 40%, #69b01c 75%, #4d950a)">
          <span>Отменить</span><span style={{ color: "#9aca68" }}>Создать</span>
        </PopHead>
        <PopForm>
          <div>
            <PopFormLabel>Order Type<RedBar /></PopFormLabel>
            <PopFormLabel /><PopFormLabel /><PopFormLabel />
          </div>
          <Hatch $w={134} $h={170} $s={5} />
          <PopFormArrow><Chevron w={9} sw={1.6} color="#555" /></PopFormArrow>
        </PopForm>
      </Popover>
      <Popover $x={791} $y={143} $w={202.5} $h={125} $tip={100} $tipColor="#98dd3a" $blur={60} $r={5}>
        <PopHead $h={35} $px={8} $center>Order Type</PopHead>
        <Choice>Order</Choice>
        <Choice>Return</Choice>
        <Choice>PreSale</Choice>
      </Popover>
    </Screen>
  );
}

/* ---------- session replay ---------- */

function Replay({ count, name, muted, clock, now, loaded, left, items, children }) {
  return (
    <Body $left={left}>
      <Player>
        <PickerRow>
          <Picker>
            <PickerCount>{count}</PickerCount>
            <PickerName $muted={muted}>{name}</PickerName>
            <CaretIcon />
          </Picker>
          <IconButton><CopyIcon /></IconButton>
        </PickerRow>
        <Stage><Clip>{children}</Clip></Stage>
        <PlayTimeline now={now} loaded={loaded} />
        <Controls>
          <PlayIcon />
          <Clock>{clock} / 03:15</Clock>
          <Control $grey $w={44}><NextIcon /></Control>
          <Control $w={74} $ml={8}><BackIcon />5s</Control>
          <Control $w={46} $ml={6}>1x</Control>
          <Control $w={178} $ml={8} $light>Skip inactivity<Toggle /></Control>
          <ViewSwitch>
            <ViewOption $on><FilmIcon />Video</ViewOption>
            <ViewOption><WireIcon />Wireframe</ViewOption>
          </ViewSwitch>
          <Control $w={183} $ml={8}>Add notes and share</Control>
          <Control $w={46} $ml={7}><DotsIcon /></Control>
        </Controls>
      </Player>
      <Sidebar items={items} />
    </Body>
  );
}

const FIRST = [
  ["Click", "CTMobile.COROrderDeliveryViewCon...", "02:30"],
  ["Click", "CTMobile.COROrderContentViewCon...", "02:32"],
  ["URL", "CTMobile.COROrderDeliveryViewCon...", "02:32"],
  ["Click", "CTMobile.COROrderDeliveryViewCon...", "02:34"],
  ["Click", "UICalendarView UICollectionView coll...", "02:34"],
  ["Click", "CTMobile.COROrderDeliveryViewCon...", "02:35"],
  ["Click", "CTMobile.COROrderContentViewCon...", "02:36"],
  ["URL", "CTMobile.COROrderDeliveryViewCon...", "02:37"],
  ["Click", "\u00a0", ""],
];
const SECOND = [
  ["URL", "CCPickListViewController", "00:38"],
  ["Click", "CCPickListViewController UITableVie...", "00:39"],
  ["Click", "CTMobile.CCMiniLayoutViewControll...", "00:40"],
  ["URL", "CTMobile.COROrderSplitViewController", "00:41"],
  ["URL", "CTMobile.COROrderListsViewControll...", "00:41"],
  ["URL", "CTMobile.COROrderContentViewCon...", "00:41"],
  ["Click", "UINavigationController UISegmented...", "00:44"],
  ["Click", "CTMobile.COROrderListsViewControll...", "00:45"],
  ["Click", "\u00a0", ""],
];

export default function App() {
  return (
    <Page>
      <GlobalStyle />
      <Frame>
        <Panel $h={1077}>
          <Peek $h={12} $left={48}>
            <PeekPill $w={89} $h={3} $gap={11} />
            <PeekPill $w={40} $h={2} $gap={8} $grey />
            <PeekPill $w={103} $h={3} $gap={8} />
            <PeekPill $w={40} $h={2} $gap={8} $grey />
            <PeekSwitch $h={3} />
          </Peek>
          <Replay count="43/61" name="CTMobile.COROrderDeliveryViewController" clock="02:30" now={2281} loaded={TOTAL} left={2} items={FIRST}>
            <OrderScreen />
          </Replay>
        </Panel>
        <Panel $h={1087}>
          <Scale $zoom={1.0033}>
            <Peek $h={18.7} $left={43}>
              <PeekPill $w={93} $h={9} $gap={8} />
              <PeekPill $w={44} $h={7.5} $gap={4} $grey />
              <PeekPill $w={107} $h={9} $gap={4} />
              <PeekPill $w={44} $h={7.5} $gap={8} $grey />
              <PeekSwitch $h={9}><PeekThumb $h={5} /></PeekSwitch>
            </Peek>
            <Replay count="31/61" name="CCPickListViewController" muted clock="00:38" now={588} loaded={909} left={-0.4} items={SECOND}>
              <AccountScreen />
            </Replay>
          </Scale>
        </Panel>
      </Frame>
    </Page>
  );
}
